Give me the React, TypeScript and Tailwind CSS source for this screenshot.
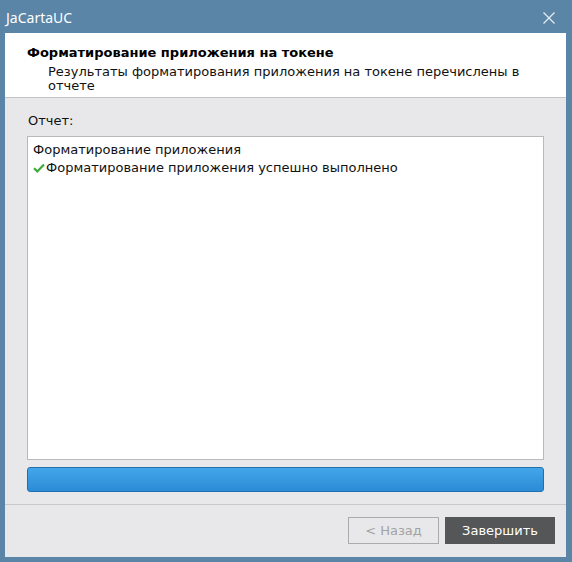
import React from "react";

export default function App() {
  const font = { fontFamily: '"DejaVu Sans", sans-serif' };
  return (
    <div className="w-[572px] h-[562px] bg-[#5a85a6] flex flex-col pl-[5px] pr-[6px] pb-[5px] overflow-hidden" style={font}>
      <div className="h-[33px] flex items-center justify-between shrink-0">
        <span className="text-white text-[14px] pl-[1px] pt-[1px]" style={{ fontFamily: '"Noto Sans", sans-serif' }}>JaCartaUC</span>
        <svg width="14" height="14" viewBox="0 0 14 14" className="mr-[10px] mt-[2px]">
          <path d="M1.5 1.5 L12.5 12.5 M12.5 1.5 L1.5 12.5" stroke="#e4ecf3" strokeWidth="1.3" />
        </svg>
      </div>
      <div className="flex-1 flex flex-col bg-[#e8e8ea]">
        <div className="bg-white h-[65px] border-b border-[#c4c4c4] pl-[22px] pt-[12px] shrink-0">
          <div className="text-[13px] font-bold text-black leading-[16px]">Форматирование приложения на токене</div>
          <div className="mt-[4px] text-[13px] text-[#111] leading-[14px] pl-[21px] pr-[30px]">
            Результаты форматирования приложения на токене перечислены в отчете
          </div>
        </div>
        <div className="flex-1 flex flex-col px-[22px] pt-[15px]">
          <div className="text-[13px] text-[#111] leading-[16px] pl-[1px]">Отчет:</div>
          <div className="mt-[7px] h-[324px] bg-white border border-[#b9b9b9] pl-[5px] pt-[4px] text-[13px] text-[#111] leading-[18px]">
            <div>Форматирование приложения</div>
            <div className="flex items-center">
              <svg width="12" height="10" viewBox="0 0 12 10" className="mr-[1px]">
                <path d="M1 5.2 L4.3 8.4 L11 1.4" stroke="#3cab3c" strokeWidth="2.2" fill="none" />
              </svg>
              <span>Форматирование приложения успешно выполнено</span>
            </div>
          </div>
          <div className="mt-[7px] h-[25px] rounded-[3px] border border-[#2070ad] bg-gradient-to-b from-[#43a6ea] to-[#2b8bd6]"></div>
        </div>
        <div className="border-t border-[#c9c9c9] h-[53px] flex items-start justify-end pr-[11px] pt-[12px] shrink-0">
          <div className="w-[91px] h-[27px] border border-[#ababab] flex items-center justify-center text-[13px] text-[#a3a3a3]">&lt; Назад</div>
          <div className="ml-[6px] w-[110px] h-[27px] bg-[#555657] flex items-center justify-center text-[13px] text-white">Завершить</div>
        </div>
      </div>
    </div>
  );
}
